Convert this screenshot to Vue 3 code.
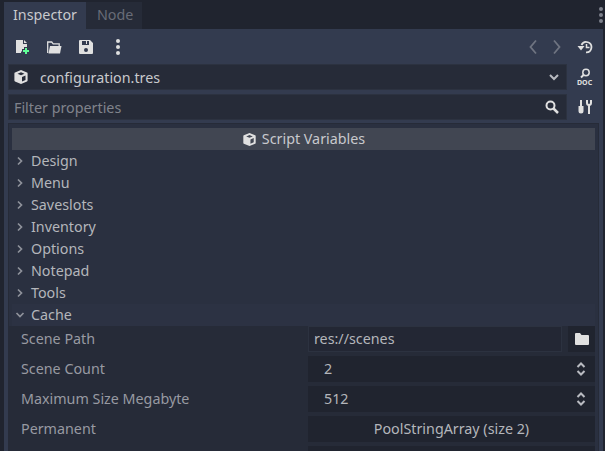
<template>
  <div class="dock">
    <div class="tabbar">
      <div class="tab active">Inspector</div>
      <div class="tab">Node</div>
      <svg class="menu-dots" width="6" height="18" viewBox="0 0 6 18"><circle cx="3" cy="3" r="2"/><circle cx="3" cy="9" r="2"/><circle cx="3" cy="15" r="2"/></svg>
    </div>
    <div class="panel">
      <div class="toolbar">
        <button class="tool">
          <svg width="16" height="16" viewBox="0 0 16 16"><path fill="#e0e0e0" d="M2 1h7v4h4v3h-3v2H8v2.500H7V14H2z"/><path fill="#e0e0e0" d="M10 1l3 3h-3z"/><path fill="#5fff97" d="M11 9h2v2h2v2h-2v2h-2v-2H9v-2h2z"/></svg>
        </button>
        <button class="tool">
          <svg width="16" height="16" viewBox="0 0 16 16"><path fill="none" stroke="#e0e0e0" stroke-width="1.300" d="M1.700 14V3h4l1.500 1.800h6V7"/><path fill="#e0e0e0" d="M4 7h11.500L14 14.500H2.500z"/></svg>
        </button>
        <button class="tool">
          <svg width="16" height="16" viewBox="0 0 16 16"><path fill="#e0e0e0" fill-rule="evenodd" d="M2 1h10l3 3v10a1 1 0 0 1-1 1H2a1 1 0 0 1-1-1V2a1 1 0 0 1 1-1zm2 1v4h7V2h-2v3H8V2zm4 7a2 2 0 1 0 0 4 2 2 0 0 0 0-4z"/></svg>
        </button>
        <button class="tool">
          <svg width="6" height="18" viewBox="0 0 6 18"><circle fill="#e0e0e0" cx="3" cy="3" r="2"/><circle fill="#e0e0e0" cx="3" cy="9" r="2"/><circle fill="#e0e0e0" cx="3" cy="15" r="2"/></svg>
        </button>
        <div class="spacer"></div>
        <svg class="nav" width="10" height="16" viewBox="0 0 10 16"><path d="M8 1.500L2.500 8 8 14.500" fill="none" stroke="#6f7481" stroke-width="1.800"/></svg>
        <svg class="nav" width="10" height="16" viewBox="0 0 10 16"><path d="M2 1.500L7.500 8 2 14.500" fill="none" stroke="#6f7481" stroke-width="1.800"/></svg>
        <svg class="history" width="16" height="16" viewBox="0 0 16 16"><path fill="none" stroke="#e0e0e0" stroke-width="1.800" d="M4.500 6A5.200 5.200 0 1 1 9 13.400"/><path fill="#e0e0e0" d="M0.500 7h7L4 11.500z"/><path fill="none" stroke="#e0e0e0" stroke-width="1.500" d="M9.500 5v3.500h3"/></svg>
      </div>

      <div class="fields">
        <div class="field-row">
          <div class="field resource">
            <svg class="cube" width="16" height="16" viewBox="0 0 16 16"><path fill="#e0e0e0" fill-rule="evenodd" d="M8 1l6 2.500a1 1 0 0 1 .6.900v7.200a1 1 0 0 1-.6.900L8 15l-6-2.500a1 1 0 0 1-.6-.900V4.400a1 1 0 0 1 .6-.900zM8 3.200L4.500 4.700 8 6.200l3.500-1.500zM9 8v4.500l3.500-1.500V6.500z"/></svg>
            <span class="res-name">configuration.tres</span>
            <svg class="drop" width="12" height="8" viewBox="0 0 12 8"><path d="M2 2l4 4 4-4" fill="none" stroke="#b9bbc1" stroke-width="2"/></svg>
          </div>
          <div class="side-icon">
            <svg width="18" height="18" viewBox="0 0 18 18"><circle cx="10" cy="4.500" r="3.200" fill="none" stroke="#e0e0e0" stroke-width="1.500"/><path d="M7.500 7L5 9.500" stroke="#e0e0e0" stroke-width="2"/><text x="1" y="16.500" class="doc-text">DOC</text></svg>
          </div>
        </div>

        <div class="field-row">
          <div class="field filter">
            <span class="placeholder">Filter properties</span>
            <svg width="16" height="16" viewBox="0 0 16 16"><circle cx="6.500" cy="6.500" r="4" fill="none" stroke="#e0e0e0" stroke-width="2"/><path d="M9.500 9.500L14 14" stroke="#e0e0e0" stroke-width="2.500"/></svg>
          </div>
          <div class="side-icon">
            <svg width="16" height="16" viewBox="0 0 16 16"><path fill="#e0e0e0" d="M3 1h2v6h1.500v5a2.500 2.500 0 0 1-5 0V7H3z"/><path fill="none" stroke="#e0e0e0" stroke-width="2" d="M10 1v3a2 2 0 0 0 4 0V1"/><path stroke="#e0e0e0" stroke-width="2" d="M12 5v10"/></svg>
          </div>
        </div>
      </div>

      <div class="inspector">
        <div class="category">
          <svg width="15" height="15" viewBox="0 0 16 16"><path fill="#e0e0e0" fill-rule="evenodd" d="M8 1l6 2.500a1 1 0 0 1 .6.900v7.200a1 1 0 0 1-.6.900L8 15l-6-2.500a1 1 0 0 1-.6-.900V4.400a1 1 0 0 1 .6-.900zM8 3.200L4.500 4.700 8 6.200l3.500-1.500zM9 8v4.500l3.500-1.500V6.500z"/></svg>
          <span>Script Variables</span>
        </div>
        <div v-for="s in sections" :key="s" class="section">
          <svg width="10" height="10" viewBox="0 0 10 10"><path d="M3 1.500L6.500 5 3 8.500" fill="none" stroke="#8f929b" stroke-width="1.700"/></svg>
          <span>{{ s }}</span>
        </div>
        <div class="section open">
          <svg width="10" height="10" viewBox="0 0 10 10"><path d="M1.500 3L5 6.500 8.500 3" fill="none" stroke="#8f929b" stroke-width="1.700"/></svg>
          <span>Cache</span>
        </div>
        <div class="props">
          <div class="prop">
            <label>Scene Path</label>
            <div class="value path">
              <div class="line-edit">res://scenes</div>
              <div class="folder">
                <svg width="14" height="12" viewBox="0 0 14 12"><path fill="#e0e0e0" d="M0 1a1 1 0 0 1 1-1h4l1.500 2H13a1 1 0 0 1 1 1v8a1 1 0 0 1-1 1H1a1 1 0 0 1-1-1z"/></svg>
              </div>
            </div>
          </div>
          <div v-for="p in spins" :key="p.label" class="prop">
            <label>{{ p.label }}</label>
            <div class="value spin">
              <span>{{ p.value }}</span>
              <svg width="10" height="14" viewBox="0 0 10 14"><path d="M1.500 5L5 1.500 8.500 5M1.500 9L5 12.500 8.500 9" fill="none" stroke="#b9bbc1" stroke-width="2"/></svg>
            </div>
          </div>
          <div class="prop">
            <label>Permanent</label>
            <div class="value array">PoolStringArray (size 2)</div>
          </div>
          <div class="prop">
            <label></label>
            <div class="value"></div>
          </div>
        </div>
      </div>
    </div>
  </div>
</template>

<script setup>
const sections = ['Design', 'Menu', 'Saveslots', 'Inventory', 'Options', 'Notepad', 'Tools']
const spins = [
  { label: 'Scene Count', value: '2' },
  { label: 'Maximum Size Megabyte', value: '512' }
]
</script>

<style>
html, body { margin: 0; background: #20242f; overflow: hidden; }
</style>

<style scoped>
.dock {
  width: 605px;
  height: 451px;
  overflow: hidden;
  padding-left: 4px;
  box-sizing: border-box;
  background: #20242f;
  font-family: "Noto Sans", sans-serif;
  font-size: 14.3px;
  color: #c8c9cd;
}

.tabbar {
  display: flex;
  height: 29px;
  padding-top: 2px;
  box-sizing: border-box;
  align-items: stretch;
  width: 599px;
}

.tab {
  width: 45px;
  padding-left: 11px;
  line-height: 26px;
  background: #262b38;
  color: #686c77;
}

.tab.active {
  width: 73px;
  padding-left: 9px;
  background: #333b4f;
  color: #c8c9cd;
}

.menu-dots {
  margin: 4px -1px 0 auto;
  fill: #7d818c;
}

.panel {
  width: 599px;
  height: 422px;
  background: #333b4f;
  padding: 4px 0 0 4px;
  box-sizing: border-box;
}

.toolbar {
  display: flex;
  align-items: center;
  height: 28px;
  margin: 0 0 3px -2px;
}

.tool {
  width: 32px;
  height: 28px;
  border: none;
  background: none;
  padding: 0;
  display: flex;
  align-items: center;
  justify-content: center;
}

.spacer { flex: 1; }

.nav { margin-right: 14px; }

.history { margin: 0 10px 0 1px; }

.fields {
  display: flex;
  flex-direction: column;
  gap: 4px;
  margin-bottom: 3px;
}

.field-row {
  display: flex;
  height: 26px;
}

.field {
  width: 559px;
  display: flex;
  align-items: center;
  background: #262b38;
  border: 1px solid #2c3240;
  box-sizing: border-box;
}

.resource { padding: 0 6px 0 4px; }

.res-name {
  flex: 1;
  margin-left: 11px;
}

.filter {
  justify-content: space-between;
  padding: 0 6px 0 5px;
}

.placeholder { color: #80838c; }

.side-icon {
  width: 36px;
  display: flex;
  align-items: center;
  justify-content: center;
}

.doc-text {
  font-family: "Noto Sans", sans-serif;
  font-size: 7px;
  font-weight: 700;
  fill: #e0e0e0;
}

.inspector {
  width: 591px;
  box-sizing: border-box;
  background: #2a3040;
  border: 1px solid #262b38;
  border-bottom: none;
  padding: 4px 3px 0;
}

.category {
  height: 22px;
  background: #414652;
  color: #c8c9cd;
  display: flex;
  align-items: center;
  justify-content: center;
  gap: 5px;
}

.category span { line-height: 20px; }

.section {
  height: 22px;
  display: flex;
  align-items: center;
  color: #b4b6bb;
  padding-left: 3px;
}

.section span { line-height: 20px; }

.section svg { margin-right: 6px; }

.section.open { background: #2c3243; }

.props {
  margin-left: -3px;
  background: #262b38;
}

.prop {
  display: flex;
  align-items: center;
  height: 26px;
  padding: 0 0 4px 12px;
  color: #989aa2;
}

.prop label {
  width: 287px;
  line-height: 26px;
}

.value {
  width: 287px;
  height: 26px;
  line-height: 26px;
  background: #20242f;
  color: #b4b6bb;
  box-sizing: border-box;
}

.path {
  display: flex;
  background: none;
  gap: 6px;
}

.line-edit {
  flex: 1;
  background: #232734;
  border: 1px solid #2c3240;
  line-height: 24px;
  padding-left: 5px;
}

.folder {
  width: 27px;
  background: #20242f;
  display: flex;
  align-items: center;
  justify-content: center;
}

.spin {
  display: flex;
  align-items: center;
  justify-content: space-between;
  padding: 0 9px 0 16px;
}

.array { text-align: center; }
</style>
